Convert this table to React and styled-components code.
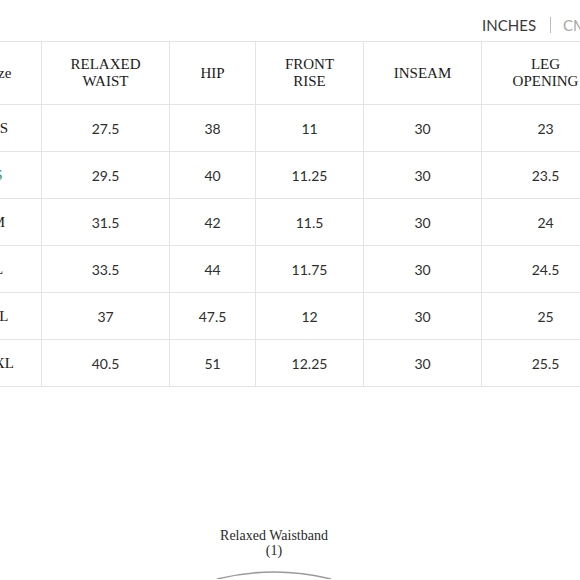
import React from "react";
import styled, { createGlobalStyle } from "styled-components";

const Global = createGlobalStyle`
  html, body { margin: 0; padding: 0; background: #fff; overflow: hidden; }
  body { width: 580px; height: 580px; }
`;

const Page = styled.div`
  width: 654px;
  margin-left: -45px;
`;

const UnitBar = styled.div`
  height: 41px;
  display: flex;
  justify-content: flex-end;
  align-items: center;
  padding-right: 22px;
  padding-top: 8px;
  box-sizing: border-box;
  font-family: Lato, "Liberation Sans", sans-serif;
  font-size: 15px;
`;

const Unit = styled.span`
  color: ${(p) => (p.$active ? "#3a3a3a" : "#a8a8a8")};
`;

const Sep = styled.span`
  width: 1px;
  height: 16px;
  background: #bdbdbd;
  margin: 0 12px 0 14px;
`;

const Table = styled.table`
  border-collapse: collapse;
  table-layout: fixed;
  width: 654px;
`;

const Th = styled.th`
  height: 62px;
  padding: 0 4px;
  border: 1px solid #e4e4e4;
  font-family: "Liberation Serif", "Times New Roman", serif;
  font-weight: normal;
  font-size: 15px;
  line-height: 17px;
  color: #1a1a1a;
  text-align: center;
  vertical-align: middle;
`;

const Td = styled.td`
  height: 46px;
  padding: 0;
  border: 1px solid #e4e4e4;
  text-align: center;
  vertical-align: middle;
  font-family: ${(p) =>
    p.$label ? '"Liberation Serif", "Times New Roman", serif' : 'Lato, "Open Sans", sans-serif'};
  font-size: ${(p) => (p.$label ? "15px" : "14px")};
  color: ${(p) => (p.$green ? "#3b8d5e" : p.$label ? "#1a1a1a" : "#2e2e2e")};
`;

const Diagram = styled.div`
  width: 548px;
  margin-top: 141px;
  display: flex;
  flex-direction: column;
  align-items: center;
`;

const Caption = styled.div`
  font-family: "Liberation Serif", "Times New Roman", serif;
  font-size: 14px;
  line-height: 15px;
  color: #2a2a2a;
  text-align: center;
`;

const Arc = styled.svg`
  display: block;
  margin-top: 7px;
`;

const widths = [86, 128, 86, 108, 118, 128];
const headers = ["Size", ["RELAXED", "WAIST"], "HIP", ["FRONT", "RISE"], "INSEAM", ["LEG", "OPENING"]];
const rows = [
  ["XS", "27.5", "38", "11", "30", "23"],
  ["S", "29.5", "40", "11.25", "30", "23.5"],
  ["M", "31.5", "42", "11.5", "30", "24"],
  ["L", "33.5", "44", "11.75", "30", "24.5"],
  ["XL", "37", "47.5", "12", "30", "25"],
  ["XXL", "40.5", "51", "12.25", "30", "25.5"],
];

export default function App() {
  return (
    <>
      <Global />
      <Page>
        <UnitBar>
          <Unit $active>INCHES</Unit>
          <Sep />
          <Unit>CM</Unit>
        </UnitBar>
        <Table>
          <colgroup>
            {widths.map((w, i) => (
              <col key={i} style={{ width: w }} />
            ))}
          </colgroup>
          <thead>
            <tr>
              {headers.map((h, i) => (
                <Th key={i}>
                  {Array.isArray(h) ? (
                    <>
                      {h[0]}
                      <br />
                      {h[1]}
                    </>
                  ) : (
                    h
                  )}
                </Th>
              ))}
            </tr>
          </thead>
          <tbody>
            {rows.map((r, ri) => (
              <tr key={ri}>
                {r.map((c, ci) => (
                  <Td key={ci} $label={ci === 0} $green={ci === 0 && c === "S"}>
                    {c}
                  </Td>
                ))}
              </tr>
            ))}
          </tbody>
        </Table>
      </Page>
      <Diagram>
        <Caption>
          Relaxed Waistband
          <br />
          (1)
        </Caption>
        <Arc width="130" height="14" viewBox="0 0 130 14">
          <path d="M 8 14 Q 65 0 122 14" fill="none" stroke="#9a9a9a" strokeWidth="1.6" />
        </Arc>
      </Diagram>
    </>
  );
}
